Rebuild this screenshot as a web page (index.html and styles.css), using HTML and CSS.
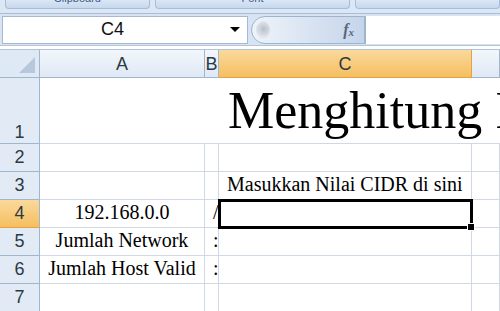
FILE: index.html
```html
<!DOCTYPE html>
<html>
<head>
  <title>Menghitung IP</title>
  <link rel="stylesheet" href="styles.css">
</head>
<body>
  <div class="ribbon">
    <div class="group"><span>Clipboard</span></div>
    <div class="group wide"><span>Font</span></div>
    <div class="group"></div>
  </div>

  <div class="formula-bar">
    <div class="name-box">
      <span class="ref">C4</span>
      <span class="arrow"></span>
    </div>
    <div class="fx-button">
      <span class="knob"></span>
      <span class="fx">f<sub>x</sub></span>
    </div>
    <div class="formula"></div>
  </div>

  <div class="sheet">
    <div class="corner"></div>
    <div class="col-head">A</div>
    <div class="col-head">B</div>
    <div class="col-head active">C</div>
    <div class="col-head"></div>

    <div class="row-head tall">1</div>
    <div class="title">Menghitung IP Address</div>

    <div class="row-head">2</div>
    <div class="cell"></div>
    <div class="cell"></div>
    <div class="cell"></div>
    <div class="cell"></div>

    <div class="row-head">3</div>
    <div class="cell"></div>
    <div class="cell"></div>
    <div class="cell left">Masukkan Nilai CIDR di sini</div>
    <div class="cell"></div>

    <div class="row-head active">4</div>
    <div class="cell center">192.168.0.0</div>
    <div class="cell left">/</div>
    <div class="cell selected"></div>
    <div class="cell"></div>

    <div class="row-head">5</div>
    <div class="cell center">Jumlah Network</div>
    <div class="cell left">:</div>
    <div class="cell"></div>
    <div class="cell"></div>

    <div class="row-head">6</div>
    <div class="cell center">Jumlah Host Valid</div>
    <div class="cell left">:</div>
    <div class="cell"></div>
    <div class="cell"></div>

    <div class="row-head">7</div>
    <div class="cell"></div>
    <div class="cell"></div>
    <div class="cell"></div>
    <div class="cell"></div>
  </div>
</body>
</html>
```

FILE: styles.css
```css
body { margin: 0; width: 500px; height: 311px; overflow: hidden; background: #fff; font-family: "Liberation Sans", Arial, sans-serif; }

/* ribbon group labels, cut off at the top */
.ribbon { height: 13px; background: #dce7f5; border-bottom: 1px solid #a9bcd3; display: flex; gap: 5px; padding: 0 0 0 5px; }
.group {
  width: 203px; height: 8px; overflow: hidden; text-align: center;
  background: linear-gradient(#dbe6f4, #c6d8ee); border: 1px solid #a7bdd8; border-top: none;
  border-radius: 0 0 4px 4px; font-size: 11px; color: #3e5b85; line-height: 1;
}
.group span { position: relative; top: -7px; }
.group.wide { width: 275px; }

.formula-bar { height: 31px; background: #d8e4f3; display: flex; align-items: center; padding: 0 0 0 2px; border-bottom: 1px solid #b2c4da; }
.name-box {
  width: 244px; height: 26px; background: #fff; border: 1px solid #a6b9d1;
  display: flex; align-items: center;
}
.name-box .ref { flex: 1; text-align: center; font-size: 18px; color: #111; padding-right: 8px; }
.name-box .arrow { width: 0; height: 0; border-left: 5px solid transparent; border-right: 5px solid transparent; border-top: 5px solid #000; margin-right: 7px; }
.fx-button {
  width: 112px; height: 26px; margin-left: 3px; border: 1px solid #9fb3cd; border-radius: 14px 0 0 14px;
  background: linear-gradient(90deg, #eef3fa, #c5d5ea); display: flex; align-items: center; justify-content: space-between;
}
.knob { width: 14px; height: 18px; margin-left: 4px; border-radius: 50%; background: radial-gradient(circle at 55% 45%, #b8bfca, #e5e9ef 70%); }
.fx { font-family: "Liberation Serif", serif; font-style: italic; font-weight: bold; font-size: 16px; color: #59677c; margin-right: 10px; }
.fx sub { font-size: 11px; vertical-align: -1px; }
.formula { flex: 1; height: 28px; background: #fff; border-left: 1px solid #9fb3cd; }

.sheet {
  margin-top: 3px; border-top: 1px solid #b2c4da;
  display: grid; grid-template-columns: 40px 165px 14px 253px 28px;
  grid-template-rows: 28px 66px repeat(6, 28px);
}
.corner { background: #dfe8f5; border-right: 1px solid #9eb6ce; border-bottom: 1px solid #9eb6ce; position: relative; }
.corner::after { content: ""; position: absolute; right: 4px; bottom: 4px; border-left: 16px solid transparent; border-bottom: 16px solid #b7c8dc; }
.col-head {
  background: linear-gradient(#f3f7fc, #dfe8f4); border-right: 1px solid #9eb6ce; border-bottom: 1px solid #9eb6ce;
  text-align: center; font-size: 18px; line-height: 28px; color: #2b3a44;
}
.col-head.active { background: linear-gradient(#fad99c, #f5bf5f); border-right-color: #e9a13d; border-bottom-color: #e9a13d; }
.row-head {
  background: #e2eaf6; border-right: 1px solid #9eb6ce; border-bottom: 1px solid #9eb6ce;
  text-align: center; font-size: 18px; color: #2b3a44; display: flex; align-items: flex-end; justify-content: center; padding-bottom: 3px;
}
.row-head.tall { padding-bottom: 0; }
.row-head.active { background: linear-gradient(#fad99c, #f5bf5f); border-bottom-color: #e9a13d; }
.title {
  grid-column: 2 / 6; border-bottom: 1px solid #d0d7e5; padding-left: 188px; overflow: hidden; white-space: nowrap;
  font-family: "Liberation Serif", "Times New Roman", serif; font-size: 52px; line-height: 1; display: flex; align-items: flex-end; padding-bottom: 6px;
}
.cell {
  border-right: 1px solid #d0d7e5; border-bottom: 1px solid #d0d7e5;
  font-family: "Liberation Serif", "Times New Roman", serif; font-size: 20px; color: #000;
  white-space: nowrap; display: flex; align-items: flex-end; padding: 0 0 3px 2px;
}
.cell.center { justify-content: center; padding-left: 0; }
.cell.left { padding-left: 8px; }
.cell.selected { position: relative; outline: 3px solid #000; outline-offset: -2px; }
.cell.selected::after { content: ""; position: absolute; right: -4px; bottom: -4px; width: 6px; height: 6px; background: #000; border: 1px solid #fff; }
```
